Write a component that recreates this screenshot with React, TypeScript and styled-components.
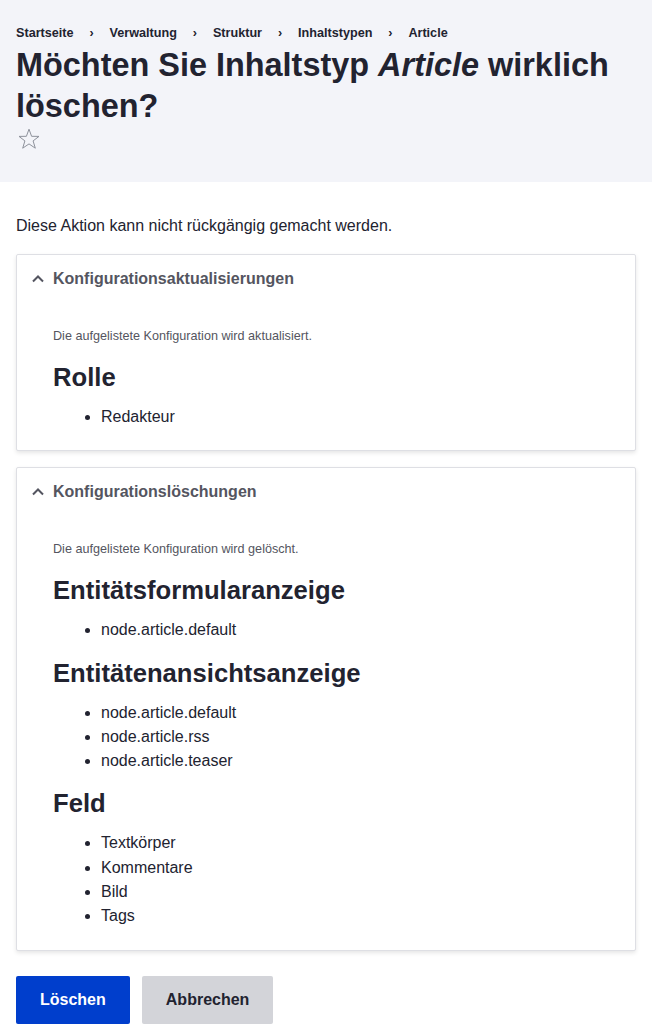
import React from "react";
import styled, { createGlobalStyle } from "styled-components";

const Global = createGlobalStyle`
  html, body { margin: 0; padding: 0; background: #fff; }
  body {
    font-family: "Liberation Sans", Arial, sans-serif;
    color: #222330;
    -webkit-font-smoothing: antialiased;
  }
  * { box-sizing: border-box; }
`;

const Header = styled.header`
  background: #f3f4f9;
  padding: 25px 16px 27px;
`;

const Crumbs = styled.nav`
  display: flex;
  align-items: center;
  font-size: 12.64px;
  line-height: 17px;
  font-weight: 700;
  color: #222330;
`;

const Crumb = styled.span`
  display: inline-flex;
  align-items: center;
`;

const Sep = styled.span`
  display: inline-block;
  width: 36px;
  text-align: center;
  font-weight: 700;
`;

const Title = styled.h1`
  margin: 3px 0 0;
  font-size: 32.43px;
  line-height: 41px;
  font-weight: 700;
  color: #222330;
  em { font-style: italic; }
`;

const StarWrap = styled.div`
  display: flex;
  align-items: flex-start;
  padding: 0 0 0 1px;
  height: 28px;
`;

const Main = styled.main`
  padding: 32px 16px 40px;
`;

const Intro = styled.p`
  margin: 0 0 16px;
  font-size: 16px;
  line-height: 24px;
`;

const Details = styled.section`
  border: 1px solid #dedfe4;
  border-radius: 2px;
  box-shadow: 0 2px 4px rgba(0, 0, 0, 0.1);
  background: #fff;
  margin-bottom: 16px;
`;

const Summary = styled.div`
  display: flex;
  align-items: center;
  gap: 8px;
  padding: 12px 16px 12px 14px;
  font-size: 16px;
  line-height: 24px;
  font-weight: 700;
  color: #545560;
`;

const Body = styled.div`
  padding: 24px 36px 21px;
`;

const Desc = styled.p`
  margin: 0 0 17px;
  font-size: 12.64px;
  line-height: 18px;
  color: #545560;
`;

const H2 = styled.h2`
  margin: 0 0 13px;
  font-size: 25.63px;
  line-height: 30px;
  font-weight: 700;
  color: #222330;
`;

const List = styled.ul`
  margin: 0 0 15px;
  padding-left: 48px;
  font-size: 16px;
  line-height: 24px;
  &:last-child { margin-bottom: 0; }
  li { line-height: 24.3px; }
`;

const Actions = styled.div`
  display: flex;
  gap: 12px;
  margin-top: 25px;
`;

const Button = styled.button<{ $primary?: boolean }>`
  height: 48px;
  padding: 0 24px;
  border: none;
  border-radius: 2px;
  font-family: inherit;
  font-size: 16px;
  font-weight: 700;
  background: ${(p) => (p.$primary ? "#003ecc" : "#d3d4d9")};
  color: ${(p) => (p.$primary ? "#fff" : "#222330")};
  cursor: pointer;
`;

const Chevron = () => (
  <svg width="14" height="14" viewBox="0 0 14 14" aria-hidden>
    <path d="M2 9.5 L7 4.5 L12 9.5" fill="none" stroke="#545560" strokeWidth="2" />
  </svg>
);

const Star = () => (
  <svg width="24" height="24" viewBox="0 0 24 24" aria-hidden>
    <path
      d="M12 2.2 L14.6 9.3 L22 9.4 L16.1 13.9 L18.3 21.2 L12 16.9 L5.7 21.2 L7.9 13.9 L2 9.4 L9.4 9.3 Z"
      fill="none"
      stroke="#8e929c"
      strokeWidth="1"
      strokeLinejoin="miter"
    />
  </svg>
);

const crumbs = ["Startseite", "Verwaltung", "Struktur", "Inhaltstypen", "Article"];

export default function App() {
  return (
    <>
      <Global />
      <Header>
        <Crumbs>
          {crumbs.map((c, i) => (
            <Crumb key={c}>
              {i > 0 && <Sep>›</Sep>}
              {c}
            </Crumb>
          ))}
        </Crumbs>
        <Title>
          Möchten Sie Inhaltstyp <em>Article</em> wirklich löschen?
        </Title>
        <StarWrap>
          <Star />
        </StarWrap>
      </Header>
      <Main>
        <Intro>Diese Aktion kann nicht rückgängig gemacht werden.</Intro>
        <Details>
          <Summary>
            <Chevron />
            Konfigurationsaktualisierungen
          </Summary>
          <Body>
            <Desc>Die aufgelistete Konfiguration wird aktualisiert.</Desc>
            <H2>Rolle</H2>
            <List>
              <li>Redakteur</li>
            </List>
          </Body>
        </Details>
        <Details>
          <Summary>
            <Chevron />
            Konfigurationslöschungen
          </Summary>
          <Body>
            <Desc>Die aufgelistete Konfiguration wird gelöscht.</Desc>
            <H2>Entitätsformularanzeige</H2>
            <List>
              <li>node.article.default</li>
            </List>
            <H2>Entitätenansichtsanzeige</H2>
            <List>
              <li>node.article.default</li>
              <li>node.article.rss</li>
              <li>node.article.teaser</li>
            </List>
            <H2>Feld</H2>
            <List>
              <li>Textkörper</li>
              <li>Kommentare</li>
              <li>Bild</li>
              <li>Tags</li>
            </List>
          </Body>
        </Details>
        <Actions>
          <Button $primary>Löschen</Button>
          <Button>Abbrechen</Button>
        </Actions>
      </Main>
    </>
  );
}
